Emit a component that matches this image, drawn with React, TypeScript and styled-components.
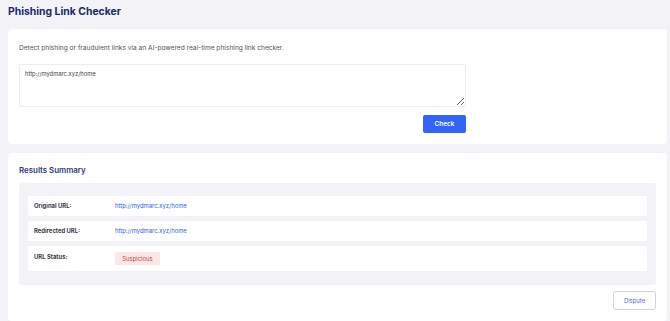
import styled, { createGlobalStyle } from 'styled-components';

const GlobalStyle = createGlobalStyle`
  body {
    margin: 0;
    background: #f3f3f7;
    font-family: Inter, "Liberation Sans", sans-serif;
  }
`

const Page = styled.div`
  display: flex;
  flex-direction: column;
  padding: 4px 3px 0 8px;
  gap: 9px;
`

const Title = styled.h1`
  margin: 0;
  font-size: 10.4px;
  line-height: 16px;
  font-weight: 700;
  color: #1b2a6b;
`

const Card = styled.section`
  background: #ffffff;
  border-radius: 4px;
  padding: 11px;
  display: flex;
  flex-direction: column;
`

const Description = styled.p`
  margin: 3px 0 0;
  font-size: 6.6px;
  line-height: 10px;
  color: #4f5461;
`

const UrlInput = styled.textarea`
  box-sizing: border-box;
  margin-top: 11px;
  width: 447px;
  height: 43px;
  border: 1px solid #ececf1;
  border-radius: 2px;
  padding: 5px;
  font-family: inherit;
  font-size: 5.8px;
  color: #444;
  outline: none;
`

const ActionRow = styled.div<{ $width?: string }>`
  display: flex;
  justify-content: flex-end;
  width: ${p => p.$width || '100%'};
`

const CheckButton = styled.button`
  margin-top: 8px;
  width: 43px;
  height: 18px;
  border: none;
  border-radius: 2px;
  background: #3464f6;
  color: #fff;
  font-family: inherit;
  font-size: 6.4px;
  font-weight: 600;
`

const SectionTitle = styled.h2`
  margin: 0;
  font-size: 7.9px;
  line-height: 12px;
  font-weight: 600;
  color: #2a3a78;
`

const ResultsPanel = styled.div`
  margin-top: 7px;
  background: #f3f3f7;
  border-radius: 3px;
  padding: 13px 9px 14px;
  display: flex;
  flex-direction: column;
  gap: 5px;
`

const ResultRow = styled.div`
  display: flex;
  align-items: flex-start;
  background: #fff;
  border-radius: 1px;
  padding: 6px;
  min-height: 8px;
`

const Label = styled.span<{ $offset?: number }>`
  width: 81px;
  flex-shrink: 0;
  padding-top: ${p => p.$offset || 0}px;
  font-size: 5.9px;
  line-height: 8px;
  font-weight: 700;
  color: #3a3d48;
`

const LinkValue = styled.a`
  font-size: 5.9px;
  line-height: 8px;
  color: #2f5ee8;
  text-decoration: none;
`

const Badge = styled.span`
  display: inline-flex;
  align-items: center;
  justify-content: center;
  width: 45px;
  height: 13px;
  background: #fde6e6;
  color: #b84a4d;
  border-radius: 1px;
  font-size: 5.9px;
`

const DisputeButton = styled.button`
  margin-top: 6px;
  width: 43px;
  height: 19px;
  background: #fff;
  border: 1px solid #cdd2ea;
  border-radius: 3px;
  color: #4f6bd8;
  font-family: inherit;
  font-size: 5.9px;
`

const url = 'http://mydmarc.xyz/home'

const App = () => {
  return (
    <>
      <GlobalStyle />
      <Page>
        <Title>Phishing Link Checker</Title>

        <Card>
          <Description>
            Detect phishing or fraudulent links via an AI-powered real-time phishing link checker.
          </Description>
          <UrlInput defaultValue={url} />
          <ActionRow $width="447px">
            <CheckButton>Check</CheckButton>
          </ActionRow>
        </Card>

        <Card>
          <SectionTitle>Results Summary</SectionTitle>
          <ResultsPanel>
            <ResultRow>
              <Label>Original URL:</Label>
              <LinkValue href="#">{url}</LinkValue>
            </ResultRow>
            <ResultRow>
              <Label>Redirected URL:</Label>
              <LinkValue href="#">{url}</LinkValue>
            </ResultRow>
            <ResultRow>
              <Label $offset={1}>URL Status:</Label>
              <Badge>Suspicious</Badge>
            </ResultRow>
          </ResultsPanel>
          <ActionRow>
            <DisputeButton>Dispute</DisputeButton>
          </ActionRow>
        </Card>
      </Page>
    </>
  )
}

export default App;
